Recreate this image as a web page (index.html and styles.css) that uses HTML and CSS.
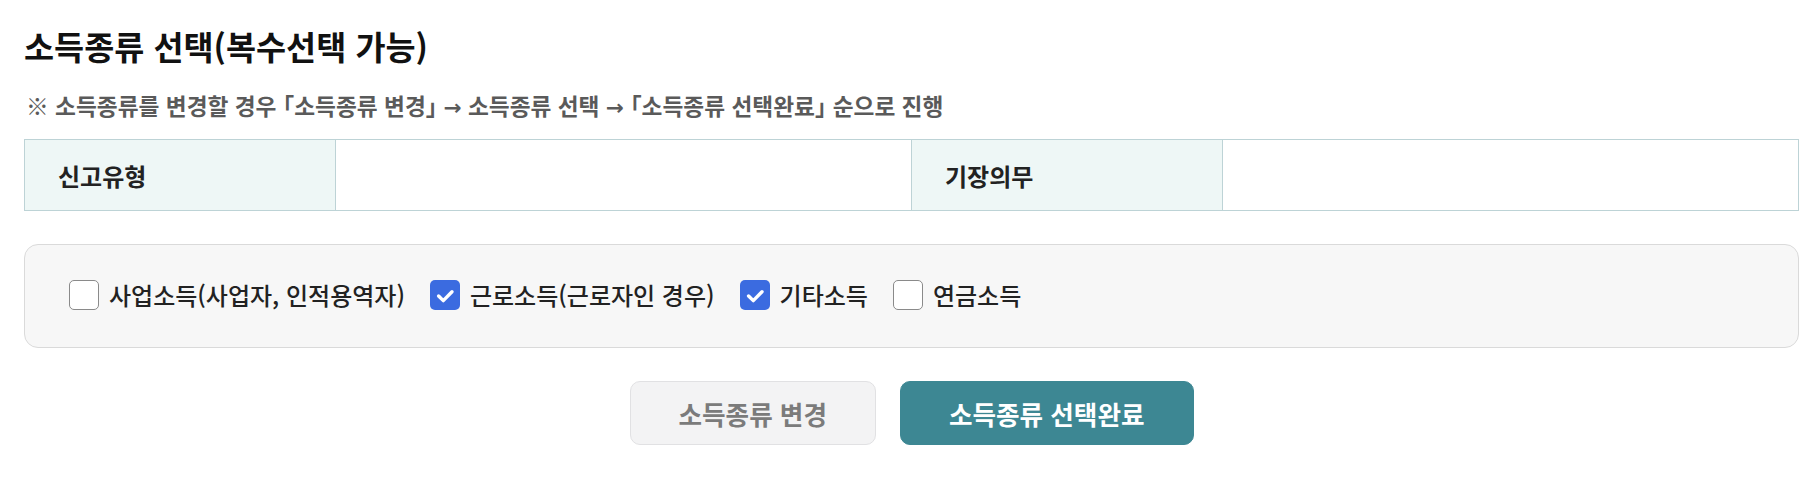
FILE: index.html
```html
<!DOCTYPE html>
<html lang="ko">
<head>
<meta charset="utf-8">
<title>소득종류 선택</title>
<link rel="stylesheet" href="styles.css">
</head>
<body>
<main class="page">
  <h1 class="title">소득종류 선택(복수선택 가능)</h1>
  <p class="notice">※ 소득종류를 변경할 경우 <span class="br">「</span>소득종류 변경<span class="br">」</span> <span class="arr">→</span> 소득종류 선택 <span class="arr">→</span> <span class="br">「</span>소득종류 선택완료<span class="br">」</span> 순으로 진행</p>
  <table class="info">
    <colgroup>
      <col class="c-head">
      <col class="c-val">
      <col class="c-head">
      <col class="c-val">
    </colgroup>
    <tr>
      <th>신고유형</th>
      <td></td>
      <th>기장의무</th>
      <td></td>
    </tr>
  </table>
  <div class="panel">
    <label class="opt"><span class="box"></span><span class="lbl">사업소득(사업자, 인적용역자)</span></label>
    <label class="opt"><span class="box on"><svg viewBox="0 0 30 30" width="30" height="30"><path d="M8.6 16 L13.3 20.6 L22 11.8" fill="none" stroke="#fff" stroke-width="3.4" stroke-linecap="round" stroke-linejoin="round"/></svg></span><span class="lbl">근로소득(근로자인 경우)</span></label>
    <label class="opt"><span class="box on"><svg viewBox="0 0 30 30" width="30" height="30"><path d="M8.6 16 L13.3 20.6 L22 11.8" fill="none" stroke="#fff" stroke-width="3.4" stroke-linecap="round" stroke-linejoin="round"/></svg></span><span class="lbl">기타소득</span></label>
    <label class="opt"><span class="box"></span><span class="lbl">연금소득</span></label>
  </div>
  <div class="actions">
    <button class="btn btn-gray" type="button">소득종류 변경</button>
    <button class="btn btn-teal" type="button">소득종류 선택완료</button>
  </div>
</main>
</body>
</html>
```

FILE: styles.css
```css
html, body {
  margin: 0;
  padding: 0;
  background: #ffffff;
}
body {
  font-family: "Noto Sans CJK KR", "Noto Sans", sans-serif;
  color: #222222;
}
.page {
  padding: 0 13px 0 24px;
}
.title {
  margin: 25px 0 0 0;
  font-size: 32.7px;
  line-height: 42px;
  font-weight: 700;
  color: #111111;
}
.notice {
  margin: 24px 0 0 2px;
  font-size: 22.7px;
  line-height: 30px;
  height: 30px;
  font-weight: 700;
  color: #5a5a5a;
}
.notice .br {
  font-feature-settings: "halt" 1;
}
.notice .arr {
  font-family: "DejaVu Sans", sans-serif;
  font-weight: 700;
  font-size: 0.95em;
  line-height: 0;
}
.info {
  margin-top: 18px;
  width: 100%;
  border-collapse: collapse;
  table-layout: fixed;
}
.info .c-head {
  width: 17.52%;
}
.info .c-val {
  width: 32.48%;
}
.info th,
.info td {
  height: 70px;
  padding: 0;
  border: 1px solid #bdd3d6;
}
.info th {
  background: #eef7f6;
  text-align: left;
  padding-left: 33px;
  font-size: 24px;
  font-weight: 600;
  color: #222222;
}
.info td {
  background: #ffffff;
}
.panel {
  margin-top: 33px;
  height: 100px;
  border: 1px solid #dadada;
  border-radius: 14px;
  background: #f7f7f7;
  display: flex;
  align-items: center;
  gap: 25px;
  padding: 0 0 2px 44px;
}
.opt {
  display: flex;
  align-items: center;
  gap: 10px;
  cursor: pointer;
}
.box {
  width: 28px;
  height: 28px;
  border: 1px solid #8a8a8a;
  border-radius: 5px;
  background: #ffffff;
  display: block;
}
.box.on {
  width: 30px;
  height: 30px;
  border: none;
  background: #3b6be0;
}
.box svg {
  display: block;
}
.lbl {
  font-size: 24px;
  line-height: 30px;
  font-weight: 500;
  color: #222222;
}
.actions {
  margin-top: 33px;
  display: flex;
  justify-content: center;
  gap: 24px;
}
.btn {
  height: 64px;
  padding: 0 48px;
  border-radius: 10px;
  font-family: "Noto Sans CJK KR", "Noto Sans", sans-serif;
  font-size: 25.6px;
  font-weight: 700;
}
.btn-gray {
  background: #f3f3f4;
  border: 1px solid #e1e1e3;
  color: #7b7b7b;
}
.btn-teal {
  background: #3d8793;
  border: 1px solid #3d8793;
  color: #ffffff;
}
```
